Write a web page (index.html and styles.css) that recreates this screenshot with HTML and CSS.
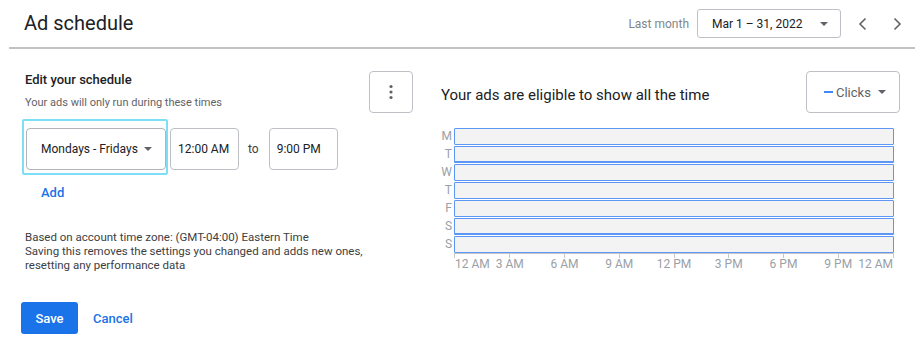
FILE: index.html
```html
<!DOCTYPE html>
<html lang="en">
<head>
    <meta charset="UTF-8">
    <meta name="viewport" content="width=device-width, initial-scale=1.0">
    <title>Ad schedule</title>
    <link rel="stylesheet" href="styles.css">
</head>
<body>
    <div class="header">
        <h1 class="title">Ad schedule</h1>
        <div class="range">
            <span class="range-label">Last month</span>
            <button class="date-select">
                <span>Mar 1 – 31, 2022</span>
                <span class="caret"></span>
            </button>
            <button class="nav">
                <svg width="16" height="16" viewBox="0 0 16 16"><path d="M10.5 2.5 5 8l5.5 5.5" fill="none" stroke="#5f6368" stroke-width="1.6"/></svg>
            </button>
            <button class="nav next">
                <svg width="16" height="16" viewBox="0 0 16 16"><path d="M5.5 2.5 11 8l-5.5 5.5" fill="none" stroke="#5f6368" stroke-width="1.6"/></svg>
            </button>
        </div>
    </div>

    <div class="content">
        <div class="editor">
            <div class="editor-top">
                <div>
                    <div class="editor-title">Edit your schedule</div>
                    <div class="editor-sub">Your ads will only run during these times</div>
                </div>
                <button class="more">
                    <svg width="4" height="16" viewBox="0 0 4 16"><circle cx="2" cy="2.5" r="1.6" fill="#5f6368"/><circle cx="2" cy="8" r="1.6" fill="#5f6368"/><circle cx="2" cy="13.5" r="1.6" fill="#5f6368"/></svg>
                </button>
            </div>

            <div class="time-row">
                <div class="focus-ring">
                    <button class="day-select">
                        <span>Mondays - Fridays</span>
                        <span class="caret"></span>
                    </button>
                </div>
                <div class="time-box">12:00 AM</div>
                <span class="to">to</span>
                <div class="time-box">9:00 PM</div>
            </div>

            <a class="add" href="#">Add</a>

            <p class="note">
                Based on account time zone: (GMT-04:00) Eastern Time<br>
                Saving this removes the settings you changed and adds new ones,<br>
                resetting any performance data
            </p>

            <div class="actions">
                <button class="save">Save</button>
                <a class="cancel" href="#">Cancel</a>
            </div>
        </div>

        <div class="preview">
            <div class="preview-top">
                <div class="preview-title">Your ads are eligible to show all the time</div>
                <button class="metric">
                    <span class="dash"></span>
                    <span>Clicks</span>
                    <span class="caret"></span>
                </button>
            </div>

            <div class="chart">
                <div class="day">M</div><div class="bar"></div>
                <div class="day">T</div><div class="bar thick"></div>
                <div class="day">W</div><div class="bar"></div>
                <div class="day">T</div><div class="bar"></div>
                <div class="day">F</div><div class="bar"></div>
                <div class="day">S</div><div class="bar thick"></div>
                <div class="day">S</div><div class="bar"></div>
                <div></div>
                <div class="axis">
                    <div class="ticks">
                        <span></span><span></span><span></span><span></span><span></span><span></span><span></span><span></span><span></span>
                    </div>
                    <div class="hours">
                        <span class="first">12 AM</span>
                        <span>3 AM</span>
                        <span>6 AM</span>
                        <span>9 AM</span>
                        <span>12 PM</span>
                        <span>3 PM</span>
                        <span>6 PM</span>
                        <span>9 PM</span>
                        <span class="last">12 AM</span>
                    </div>
                </div>
            </div>
        </div>
    </div>
</body>
</html>
```

FILE: styles.css
```css
body {
    margin: 0;
    font-family: Roboto, "Liberation Sans", Arial, sans-serif;
    color: #3c4043;
    background: #fff;
}
button {
    font-family: inherit;
    background: #fff;
    cursor: pointer;
    box-sizing: border-box;
    white-space: nowrap;
}
.header {
    display: flex;
    align-items: center;
    justify-content: space-between;
    height: 47px;
    margin: 0 7px 0 9px;
    padding: 0 10px 0 15px;
    border-bottom: 2px solid #c2c2c2;
}
.title {
    margin: 0;
    font-size: 20px;
    font-weight: 400;
    color: #202124;
    padding-bottom: 1px;
}
.range {
    display: flex;
    align-items: center;
}
.range-label {
    font-size: 12px;
    color: #80868b;
    margin-right: 8px;
}
.date-select {
    display: flex;
    align-items: center;
    justify-content: space-between;
    width: 144px;
    height: 29px;
    padding: 0 12px 0 14px;
    border: 1px solid #bdc1c6;
    border-radius: 3px;
    font-size: 12px;
    color: #202124;
}
.caret {
    width: 0;
    height: 0;
    border-left: 4.5px solid transparent;
    border-right: 4.5px solid transparent;
    border-top: 4.5px solid #5f6368;
}
.nav {
    border: 0;
    padding: 0;
    width: 16px;
    height: 16px;
    margin-left: 14px;
    background: none;
}
.nav.next {
    margin-left: 18px;
}
.content {
    display: flex;
    padding: 0 22px 0 21px;
}
.editor {
    width: 392px;
    margin-right: 28px;
}
.editor-top {
    display: flex;
    justify-content: space-between;
    margin-top: 22px;
    padding-left: 4px;
}
.editor-title {
    font-size: 13px;
    font-weight: 500;
    color: #202124;
    margin-top: 1px;
}
.editor-sub {
    font-size: 11px;
    color: #5f6368;
    margin-top: 9px;
}
.more {
    width: 44px;
    height: 42px;
    border: 1px solid #bdc1c6;
    border-radius: 4px;
    display: flex;
    align-items: center;
    justify-content: center;
}
.time-row {
    display: flex;
    align-items: flex-start;
    margin: 6px 0 0 1px;
}
.focus-ring {
    padding: 7px 0 3px 2px;
    border: 2px solid #7ddff5;
    border-radius: 2px;
}
.day-select {
    display: flex;
    align-items: center;
    justify-content: space-between;
    width: 140px;
    height: 42px;
    padding: 0 13px 0 14px;
    border: 1px solid #b0b4b8;
    border-radius: 4px;
    font-size: 12px;
    color: #202124;
}
.time-box {
    width: 69px;
    height: 42px;
    margin: 9px 0 0 2px;
    box-sizing: border-box;
    border: 1px solid #bdc1c6;
    border-radius: 4px;
    padding-left: 7px;
    font-size: 12px;
    line-height: 40px;
    color: #202124;
}
.to {
    font-size: 12px;
    margin: 23px 8px 0 9px;
    color: #3c4043;
}
.add {
    display: inline-block;
    margin: 10px 0 0 20px;
    font-size: 13px;
    font-weight: 500;
    color: #1a73e8;
    text-decoration: none;
}
.note {
    margin: 29px 0 0 4px;
    font-size: 11.5px;
    line-height: 14px;
    color: #3c4043;
}
.actions {
    display: flex;
    align-items: center;
    margin-top: 30px;
}
.save {
    width: 57px;
    height: 32px;
    border: 0;
    border-radius: 3px;
    background: #1a73e8;
    color: #fff;
    font-size: 13px;
    font-weight: 500;
}
.cancel {
    margin-left: 15px;
    font-size: 13px;
    font-weight: 500;
    color: #1a73e8;
    text-decoration: none;
}
.preview {
    flex: 1;
}
.preview-top {
    display: flex;
    justify-content: space-between;
    align-items: center;
    margin-top: 22px;
}
.preview-title {
    font-size: 15px;
    font-weight: 400;
    color: #202124;
    margin-top: 6px;
}
.metric {
    display: flex;
    align-items: center;
    width: 94px;
    height: 42px;
    padding: 0 12px 0 17px;
    border: 1px solid #bdc1c6;
    border-radius: 4px;
    font-size: 13px;
    color: #5f6368;
}
.dash {
    width: 9px;
    height: 2px;
    background: #4285f4;
    margin-right: 3px;
}
.metric .caret {
    margin-left: 7px;
}
.chart {
    display: grid;
    grid-template-columns: 18px 440px;
    row-gap: 1px;
    margin: 15px 0 0 -5px;
}
.day {
    font-size: 12px;
    color: #9aa0a6;
    text-align: right;
    padding-right: 2px;
    line-height: 17px;
}
.bar {
    height: 15px;
    border: 1px solid #5c97f5;
    border-radius: 1px;
    background: #f3f3f3;
}
.bar.thick {
    border-bottom-width: 2px;
    height: 14px;
}
.axis {
    margin-top: -1px;
}
.ticks {
    display: flex;
    justify-content: space-between;
    border-top: 1px solid #c7c7c7;
    height: 4px;
}
.ticks span {
    width: 1px;
    background: #c7c7c7;
}
.hours {
    display: flex;
    justify-content: space-between;
    font-size: 12px;
    color: #9aa0a6;
    margin-top: -1px;
    padding: 0 24px 0 24px;
}
.hours span {
    width: 0;
    display: flex;
    justify-content: center;
    white-space: nowrap;
}
.hours .first {
    justify-content: flex-start;
    margin-left: -23px;
}
.hours .last {
    justify-content: flex-end;
    margin-right: -23px;
}
```
